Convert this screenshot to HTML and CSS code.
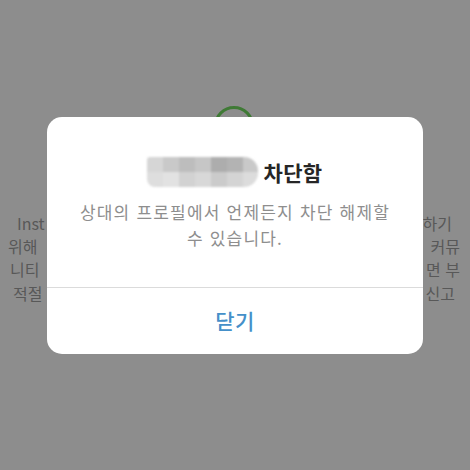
FILE: index.html
```html
<!DOCTYPE html>
<html lang="ko">
<head>
  <meta charset="UTF-8" />
  <meta name="viewport" content="width=device-width, initial-scale=1.0" />
  <title>차단함</title>
  <link rel="stylesheet" href="styles.css">
</head>
<body>
  <div class="page">
    <div class="avatar-ring"></div>
    <div class="notice">
      <div class="bg-line line-1"><span>Inst</span><span>하기</span></div>
      <div class="bg-line line-2"><span>위해</span><span>커뮤</span></div>
      <div class="bg-line line-3"><span>니티</span><span>면 부</span></div>
      <div class="bg-line line-4"><span>적절</span><span>신고</span></div>
    </div>
  </div>

  <div class="overlay">
    <div class="dialog">
      <div class="dialog-body">
        <h2 class="dialog-title">
          <span class="hidden-name">
            <i style="background:#d6d6d6"></i><i style="background:#c9c9c9"></i><i style="background:#bdbdbd"></i><i style="background:#c6c6c6"></i><i style="background:#adadad"></i><i style="background:#b3b3b3"></i><i style="background:#c9c9c9"></i>
            <i style="background:#dedede"></i><i style="background:#e2e2e2"></i><i style="background:#d2d2d2"></i><i style="background:#d8d8d8"></i><i style="background:#cbcbcb"></i><i style="background:#d4d4d4"></i><i style="background:#dcdcdc"></i>
          </span>
          <span>차단함</span>
        </h2>
        <p class="dialog-text">상대의 프로필에서 언제든지 차단 해제할<br>수 있습니다.</p>
      </div>
      <button class="dialog-btn" type="button">닫기</button>
    </div>
  </div>
</body>
</html>
```

FILE: styles.css
```css
* {
  box-sizing: border-box;
}
html, body {
  margin: 0;
  height: 100%;
}
body {
  font-family: "Noto Sans CJK KR", "Noto Sans", sans-serif;
  background-color: #8d8d8d;
  overflow: hidden;
}
.page {
  padding-top: 106px;
}
.avatar-ring {
  width: 40px;
  height: 40px;
  margin-left: 214px;
  border: 3px solid #3f7a35;
  border-radius: 50%;
}
.notice {
  margin-top: 66px;
  color: #585858;
  font-size: 16px;
  line-height: 23.2px;
}
.bg-line {
  display: flex;
  justify-content: space-between;
}
.line-1 { padding: 0 18px 0 17px; }
.line-2 { padding: 0 10px 0 8px; }
.line-3 { padding: 0 10px 0 10px; }
.line-4 { padding: 0 15px 0 13px; }

.overlay {
  position: absolute;
  inset: 0;
  display: flex;
  justify-content: center;
  padding-top: 117px;
}
.dialog {
  width: 376px;
  height: 237px;
  background: #ffffff;
  border-radius: 15px;
  display: flex;
  flex-direction: column;
  overflow: hidden;
}
.dialog-body {
  padding: 40px 0 0;
  height: 171px;
  border-bottom: 1px solid #dbdbdb;
  text-align: center;
}
.dialog-title {
  margin: 0;
  display: flex;
  justify-content: center;
  align-items: center;
  gap: 5px;
  height: 30px;
  font-size: 21px;
  font-weight: 700;
  letter-spacing: 0.4px;
  color: #262626;
}
.hidden-name {
  display: grid;
  grid-template-columns: repeat(7, 1fr);
  width: 111px;
  height: 30px;
  border-radius: 3px 14px 14px 8px;
  overflow: hidden;
  filter: blur(1.2px);
}
.hidden-name i {
  display: block;
}
.dialog-text {
  margin: 12px 0 0;
  font-size: 17px;
  line-height: 26px;
  letter-spacing: 1.2px;
  color: #8e8e8e;
}
.dialog-btn {
  flex: 1;
  border: none;
  background: none;
  font-family: inherit;
  font-size: 21px;
  font-weight: 500;
  letter-spacing: 0.5px;
  color: #4590c9;
  padding: 0 0 2px;
}
```
